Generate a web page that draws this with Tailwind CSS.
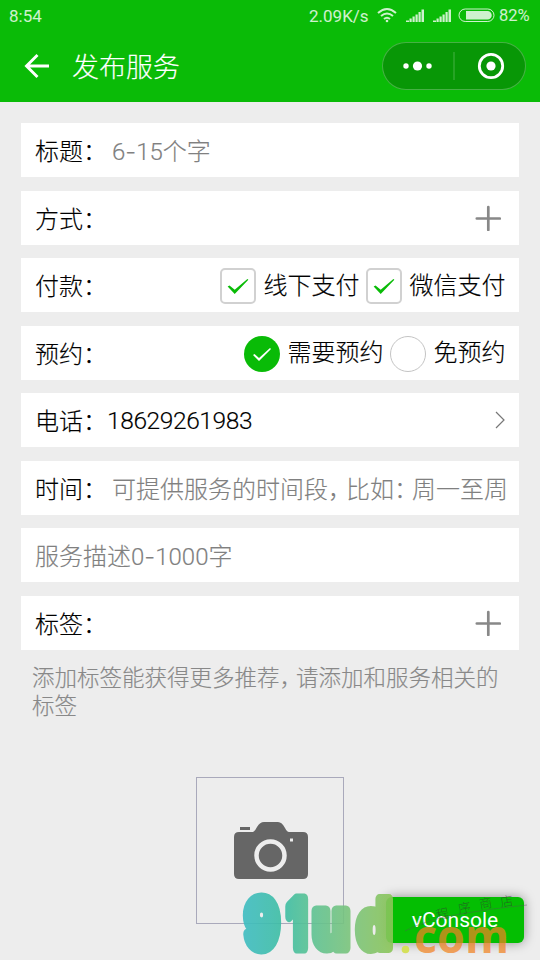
<!DOCTYPE html>
<html lang="zh-CN">
<head>
<meta charset="utf-8">
<title>发布服务</title>
<script src="https://cdn.jsdelivr.net/npm/@tailwindcss/browser@4"></script>
</head>
<body class="w-[540px] h-[960px] overflow-hidden relative bg-[#ededed] font-['Noto_Sans_CJK_SC',sans-serif] font-light text-black">
<header class="h-[102px] bg-[#0abb07] text-white">
  <div class="h-8 flex items-center justify-between pl-[9px] pr-[9px] font-['Roboto',sans-serif] font-normal text-[17px] leading-8 text-white/80">
    <span>8:54</span>
    <div class="flex items-center">
      <span class="w-[60px] whitespace-nowrap">2.09K/s</span>
      <svg class="ml-2 w-5 h-4 -mt-[2px]" viewBox="0 0 20 16" fill="none" stroke="currentColor" stroke-width="2"><path d="M1 6Q10-2 19 6M4 9Q10 4 16 9M7 12Q10 9.500 13 12"/><circle cx="10" cy="14" r="1.300" fill="currentColor" stroke="none"/></svg>
      <svg class="ml-2 w-5 h-4 -mt-[3px]" viewBox="0 0 20 16" fill="currentColor"><path d="M1 13.500h3V15H1zM4.500 11.500h2.200V15H4.500zM7.500 9.500h2.200V15H7.500zM10.500 7.500h2.200V15h-2.200zM13.500 5h2.200v10h-2.200zM16.500 2.500h2.500V15h-2.500z"/></svg>
      <svg class="ml-[7px] w-5 h-4 -mt-[3px]" viewBox="0 0 20 16" fill="currentColor"><path d="M1 13.500h3V15H1zM4.500 11.500h2.200V15H4.500zM7.500 9.500h2.200V15H7.500zM10.500 7.500h2.200V15h-2.200zM13.500 5h2.200v10h-2.200zM16.500 2.500h2.500V15h-2.500z"/></svg>
      <svg class="ml-[6px] w-[37px] h-4 -mt-[2px]" viewBox="0 0 37 16"><rect x="1" y="2" width="35" height="12.500" rx="6.250" fill="none" stroke="currentColor"/><path d="M8 4h21.500a4.250 4.250 0 0 1 0 8.500H8z" fill="currentColor"/></svg>
      <span class="ml-1 w-[32px] whitespace-nowrap text-[16.500px]">82%</span>
    </div>
  </div>
  <div class="h-[70px] flex items-center pl-6 pr-[14px] pb-[2px]">
    <svg class="w-[26px] h-[26px]" viewBox="0 0 26 26" fill="none" stroke="white" stroke-width="2.900"><path d="M13.500 2L2.500 13l11 11M2.500 13H25"/></svg>
    <h1 class="ml-[22px] text-[27px] leading-9 font-light [-webkit-text-stroke:0.15px]">发布服务</h1>
    <div class="ml-auto w-36 h-12 rounded-full border border-white/25 bg-[#089706] flex items-center">
      <svg class="w-full h-full" viewBox="0 0 142 46" fill="white"><circle cx="23" cy="23" r="2.700"/><circle cx="34.500" cy="23" r="4.600"/><circle cx="46" cy="23" r="2.700"/><path d="M71 9v28" stroke="white" stroke-opacity=".25"/><circle cx="108" cy="23" r="11.700" fill="none" stroke="white" stroke-width="2.800"/><circle cx="108" cy="23" r="4.600"/></svg>
    </div>
  </div>
</header>

<main class="pt-[21px] px-[21px] [-webkit-text-stroke:0.15px]">
  <form class="flex flex-col gap-[13.500px] text-2xl leading-[36px]">
    <div class="h-[54px] bg-white flex items-center px-[14px]"><span>标题：</span><span class="ml-[5px] mt-[3px] text-[#808080] font-['Roboto','Noto_Sans_CJK_SC',sans-serif]">6<span class="font-['Inter',sans-serif]">-</span>15个字</span></div>
    <div class="h-[54px] bg-white flex items-center px-[14px]"><span>方式：</span>
      <svg class="ml-auto mr-[4px] w-[26px] h-[26px]" viewBox="0 0 26 26" stroke="#888" stroke-width="2.700" stroke-linecap="round"><path d="M13.300 2v23M1.800 13.500h23"/></svg></div>
    <div class="h-[54px] bg-white flex items-center pl-[14px] pr-[13.500px]"><span>付款：</span>
      <div class="ml-auto flex items-center">
        <span class="w-9 h-9 mt-[2px] border-[2px] border-[#d1d1d1] rounded-[5px] bg-white"><svg class="w-full h-full" viewBox="0 0 34 34"><path d="M6 17.500L8 16.500 13.500 21 27 9.500 28 10.300 13.500 25.500z" fill="#09bb07"/></svg></span>
        <span class="ml-2 -mt-[3px]">线下支付</span>
        <span class="ml-[6px] w-9 h-9 mt-[2px] border-[2px] border-[#d1d1d1] rounded-[5px] bg-white"><svg class="w-full h-full" viewBox="0 0 34 34"><path d="M6 17.500L8 16.500 13.500 21 27 9.500 28 10.300 13.500 25.500z" fill="#09bb07"/></svg></span>
        <span class="ml-2 -mt-[3px]">微信支付</span>
      </div></div>
    <div class="h-[54px] bg-white flex items-center pl-[14px] pr-[13.500px]"><span>预约：</span>
      <div class="ml-auto flex items-center">
        <span class="w-9 h-9 mt-[3px] rounded-full bg-[#09bb07]"><svg class="w-full h-full" viewBox="0 0 36 36"><path d="M9 19l1.500-1 4.500 4L26 12l1 1-12 12z" fill="white"/></svg></span>
        <span class="ml-2 -mt-[3px]">需要预约</span>
        <span class="ml-[6px] w-9 h-9 mt-[3px] border-[1.500px] border-[#c4c4c4] rounded-full bg-white"></span>
        <span class="ml-2 -mt-[3px]">免预约</span>
      </div></div>
    <div class="h-[54px] bg-white flex items-center px-[14px]"><span>电话：</span><span class="mt-[2px] font-['Roboto',sans-serif] text-[24.500px] tracking-[-0.400px]">18629261983</span>
      <svg class="ml-auto w-[10px] h-[18px]" viewBox="0 0 10 18" fill="none" stroke="#777" stroke-width="1.200"><path d="M1 1l8 8-8 8"/></svg></div>
    <div class="h-[54px] bg-white flex items-center pl-[14px] pr-[11px]"><span class="shrink-0">时间：</span><span class="ml-[5px] overflow-hidden whitespace-nowrap text-[#808080]">可提供服务的时间段<span class="tracking-[-6px]">，</span>比如<span class="tracking-[-6px]">：</span>周一至周</span></div>
    <div class="h-[54px] bg-white flex items-center px-[14px] text-[#808080] font-['Roboto','Noto_Sans_CJK_SC',sans-serif]"><span class="mt-[3px]">服务描述0<span class="font-['Inter',sans-serif]">-</span>1000字</span></div>
    <div class="h-[54px] bg-white flex items-center px-[14px]"><span>标签：</span>
      <svg class="ml-auto mr-[4px] w-[26px] h-[26px]" viewBox="0 0 26 26" stroke="#888" stroke-width="2.700" stroke-linecap="round"><path d="M13.300 2v23M1.800 13.500h23"/></svg></div>
  </form>
  <p class="pl-[11px] pt-[12px] text-[22.500px] leading-[28.500px] text-[#888] whitespace-nowrap">添加标签能获得更多推荐<span class="tracking-[-6px]">，</span>请添加和服务相关的<br>标签</p>
  <div class="ml-[175px] mt-[58px] w-[148px] h-[147px] border-[1.500px] border-[#a9a9bb] flex items-center justify-center">
    <svg class="w-[74px] h-[58px] ml-[1px] mt-[1px]" viewBox="0 0 74 58"><path d="M5 10H19Q21 9 23 5Q26 0 30 0H44Q48 0 51 6Q53 10 55 10H69Q74 10 74 15V52Q74 57 69 57H5Q0 57 0 52V15Q0 10 5 10z" fill="#666"/><path d="M6 5h10v3H6z" fill="#666"/><circle cx="36.500" cy="33.500" r="14" fill="none" stroke="#ededed" stroke-width="4.500"/><path d="M56 16.500h3v3h-3z" fill="#ededed"/></svg>
  </div>
</main>

<button class="absolute left-[386px] top-[897px] w-[138px] h-[46px] rounded-[6px] bg-[#04be02] text-white font-['Roboto',sans-serif] font-normal text-[21px] leading-[46px] shadow-[0_0_12px_rgba(0,0,0,0.4)]">vConsole</button>

<svg class="absolute left-0 top-[880px] w-[540px] h-20 pointer-events-none" viewBox="0 880 540 80">
  <defs>
    <linearGradient id="g9" gradientUnits="userSpaceOnUse" x1="243" y1="0" x2="281" y2="0"><stop stop-color="#3fbdc2"/><stop offset="1" stop-color="#3dbea5"/></linearGradient>
    <linearGradient id="g1" gradientUnits="userSpaceOnUse" x1="286" y1="0" x2="308" y2="0"><stop stop-color="#3fbea3"/><stop offset="1" stop-color="#58c294"/></linearGradient>
    <linearGradient id="gu" gradientUnits="userSpaceOnUse" x1="312" y1="0" x2="350" y2="0"><stop stop-color="#5ec293"/><stop offset="1" stop-color="#7bc47c"/></linearGradient>
    <linearGradient id="gd" gradientUnits="userSpaceOnUse" x1="355" y1="0" x2="393" y2="0"><stop stop-color="#7dc47a"/><stop offset="1" stop-color="#8cc658"/></linearGradient>
  </defs>
  <g font-family="Inter,sans-serif" font-weight="800" font-size="67" stroke-linejoin="round" opacity=".9">
    <text x="245" y="947.500" textLength="34" lengthAdjust="spacingAndGlyphs" fill="url(#g9)" stroke="url(#g9)" stroke-width="11">9</text>
    <text x="287" y="947.500" textLength="20" lengthAdjust="spacingAndGlyphs" fill="url(#g1)" stroke="url(#g1)" stroke-width="11">1</text>
    <text x="313" y="947.500" textLength="36" lengthAdjust="spacingAndGlyphs" fill="url(#gu)" stroke="url(#gu)" stroke-width="11">u</text>
    <text x="357" y="947.500" textLength="35" lengthAdjust="spacingAndGlyphs" fill="url(#gd)" stroke="url(#gd)" stroke-width="10">d</text>
  </g>
  <circle cx="405.500" cy="949.500" r="3.800" fill="#d5e05a"/>
  <text x="414" y="953" font-family="Open Sans,sans-serif" font-weight="700" font-size="46" fill="#f28322" fill-opacity=".72" textLength="95" lengthAdjust="spacingAndGlyphs">com</text>
  <path d="M405 931Q425 920 460 914T527 905" fill="none" stroke="#555" stroke-opacity=".4"/>
  <g font-family="Noto Sans CJK SC,sans-serif" font-weight="300" font-size="13" fill="#333" fill-opacity=".6"><text transform="translate(418 925) rotate(-14)" fill-opacity=".3">小</text><text transform="translate(437 920) rotate(-12)">程</text><text transform="translate(459 914) rotate(-12)">序</text><text transform="translate(480 909) rotate(-10)">商</text><text transform="translate(501 907) rotate(-10)">店</text></g>
</svg>
</body>
</html>
